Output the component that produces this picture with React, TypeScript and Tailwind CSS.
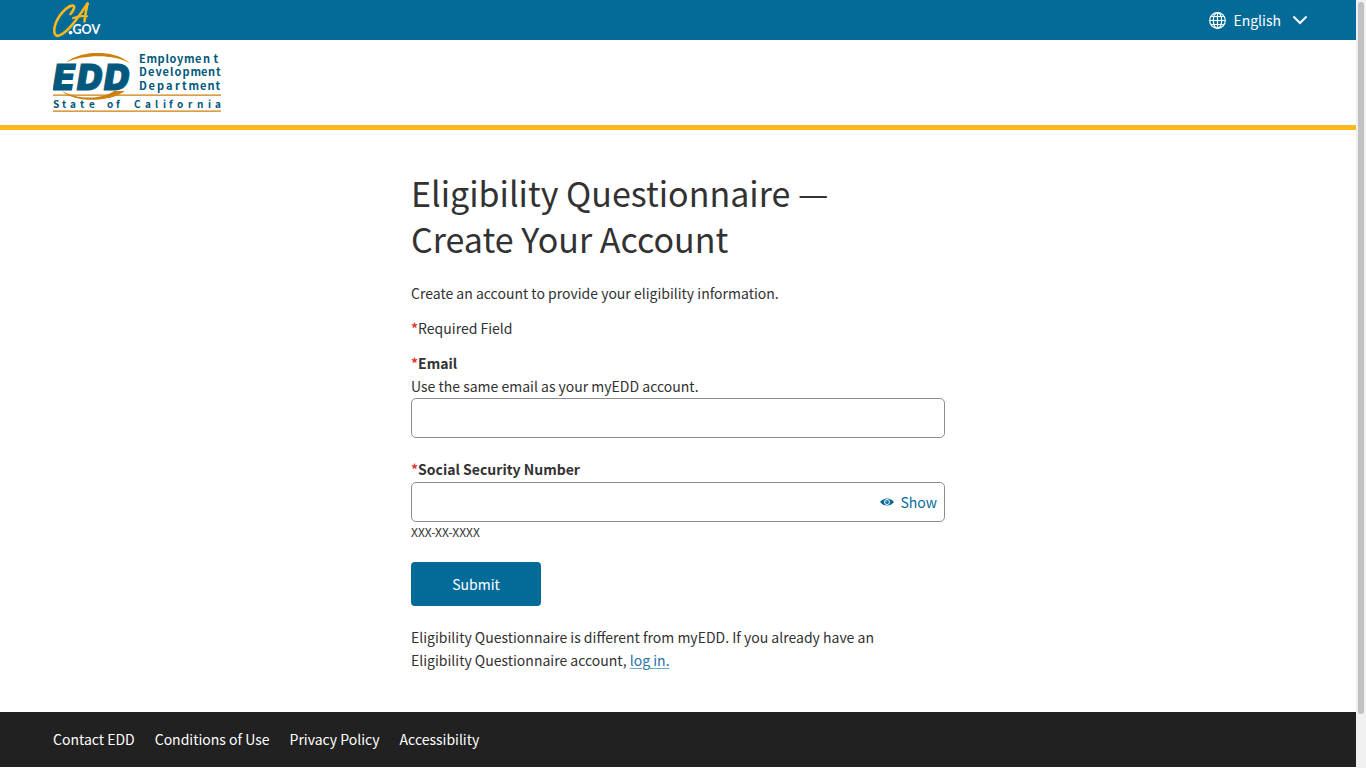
import { useState } from "react";

function CaGovLogo() {
  return (
    <svg width="48" height="36" viewBox="0 0 48 36" role="img" aria-label="CA.gov">
      <g fill="none" stroke="#fdb81e" strokeLinecap="round" strokeLinejoin="round">
        <path strokeWidth="2.6" d="M17.500 12C21 8 22.600 3.600 19.400 3.600C14 4 4.500 14 1.900 24C0 31.500 2.500 35 6.500 33.400C17 29 27 12 34.600 1.600" />
        <path strokeWidth="2.5" d="M34.600 1.600C33.300 7.500 32 13.500 31.500 19.500" />
        <path strokeWidth="2" d="M20 16.200C24.500 14.200 29 13.600 34 14.200" />
      </g>
      <circle cx="17.600" cy="30.600" r="1.900" fill="#fff" />
      <text x="19.500" y="32" fill="#fff" fontFamily="Lato, sans-serif" fontWeight="700" fontSize="12.500">GOV</text>
    </svg>
  );
}

function EddLogo() {
  return (
    <svg width="169" height="59" viewBox="0 0 169 59" role="img" aria-label="Employment Development Department, State of California">
      <path fill="#cf7f0b" d="M13 9.500C28-3 62-4 77 10.500C62 1 31 1 13 9.500Z" />
      <path fill="#cf7f0b" d="M9 38C20 49.500 56 50 72 38H61C50 46 26 47.500 9 38Z" />
      <path fill="#cf7f0b" d="M0 41.500H168V42.800H0ZM0 57.500H168V58.800H0Z" />
      <text x="0 24 51" y="36.500" fill="#02587d" stroke="#02587d" strokeWidth="1" fontFamily="Inter, sans-serif" fontStyle="italic" fontWeight="900" fontSize="35">EDD</text>
      <g fill="#02587d" fontFamily="'Noto Sans CJK SC', sans-serif" fontWeight="700" fontSize="11">
        <text y="10" x="86 93.500 104.500 112.500 116.500 124 131 142 150 160.500">Employment</text>
        <text y="23" x="86 95 102.500 109.500 117 121.500 129.500 137.500 148 155 163">Development</text>
        <text y="37" x="86 95.500 104 113 122 129 135.500 147 154.500 162.500">Department</text>
        <text y="54.500" fontSize="10" x="0 9 17 27 36 45 54 63 71 81 92 102 110 116 124 135 144 155 162">State of California</text>
      </g>
    </svg>
  );
}

function GlobeIcon() {
  return (
    <svg width="17" height="17" viewBox="0 0 17 17" fill="none" stroke="currentColor" strokeWidth="1.200" aria-hidden="true">
      <circle cx="8.500" cy="8.500" r="7.800" />
      <ellipse cx="8.500" cy="8.500" rx="4.200" ry="7.800" />
      <path d="M8.500 1v15M1 8.500h15M2.200 4.500h12.600M2.200 12.500h12.600" />
    </svg>
  );
}

function EyeIcon() {
  return (
    <svg width="14" height="8" viewBox="0 0 14 8" aria-hidden="true">
      <path fill="currentColor" d="M0 4C3.500-.8 10.500-.8 14 4C10.500 8.800 3.500 8.800 0 4Z" />
      <circle cx="7" cy="4" r="2.500" fill="none" stroke="#fff" strokeWidth="1" />
      <path d="M6 4.200A1.200 1.200 0 0 1 7.200 3" fill="none" stroke="#fff" strokeWidth=".7" />
    </svg>
  );
}

function Required() {
  return <span className="font-bold text-[#d83933]">*</span>;
}

const footerLinks = ["Contact EDD", "Conditions of Use", "Privacy Policy", "Accessibility"];
const inputClass = "block h-10 w-full rounded-[5px] border border-[#8d8d8d] bg-white px-3 outline-none";

export default function App() {
  const [shown, setShown] = useState(false);
  return (
    <div className="flex min-h-screen bg-white font-['Noto_Sans_CJK_SC',sans-serif] text-[14px] leading-[23px] text-[#323232]">
      <div className="flex min-w-0 flex-1 flex-col">
        <header>
          <div className="flex h-10 items-center justify-between bg-[#046b99] pr-12 pl-[53px] text-white">
            <a href="#ca" className="block"><CaGovLogo /></a>
            <button type="button" className="flex items-center gap-[7px]">
              <GlobeIcon />
              <span>English</span>
              <svg className="ml-1" width="16" height="10" viewBox="0 0 16 10" fill="none" stroke="currentColor" strokeWidth="2" aria-hidden="true">
                <path d="M1.500 1.500L8 8L14.500 1.500" />
              </svg>
            </button>
          </div>
          <div className="border-b-[5px] border-[#fdb81e] py-[13px] pl-[53px]">
            <a href="#edd" className="block w-fit"><EddLogo /></a>
          </div>
        </header>

        <main className="mx-auto w-full max-w-[534px] flex-1 py-10">
          <h1 className="max-w-[500px] text-[34px] leading-[46px]">Eligibility Questionnaire — Create Your Account</h1>
          <p className="mt-5">Create an account to provide your eligibility information.</p>
          <p className="mt-3"><Required />Required Field</p>
          <form onSubmit={(e) => e.preventDefault()}>
            <label htmlFor="email" className="mt-3 block font-bold"><Required />Email</label>
            <p id="email-hint">Use the same email as your myEDD account.</p>
            <input id="email" type="email" aria-describedby="email-hint" className={inputClass} />
            <label htmlFor="ssn" className="mt-5 mb-px block font-bold"><Required />Social Security Number</label>
            <div className="relative">
              <input id="ssn" type={shown ? "text" : "password"} aria-describedby="ssn-hint" className={inputClass} />
              <button type="button" onClick={() => setShown(!shown)} className="absolute inset-y-0 right-2 flex items-center gap-[7px] text-[#046b99]">
                <EyeIcon />
                {shown ? "Hide" : "Show"}
              </button>
            </div>
            <p id="ssn-hint" className="text-[12px] leading-5">XXX-XX-XXXX</p>
            <button type="submit" className="mt-5 h-11 w-[130px] rounded bg-[#046b99] text-white">Submit</button>
          </form>
          <p className="mt-5 max-w-[500px]">
            Eligibility Questionnaire is different from myEDD. If you already have an Eligibility Questionnaire account,{" "}
            <a href="#login" className="text-[#2672a8] underline decoration-[#6ea9c6] decoration-1 underline-offset-2">log in.</a>
          </p>
        </main>

        <footer className="mb-px bg-[#212121] px-[53px] py-4 text-white">
          <nav className="flex gap-5">
            {footerLinks.map((t) => (
              <a key={t} href="#footer">{t}</a>
            ))}
          </nav>
        </footer>
      </div>
      <div className="flex h-screen w-[10px] flex-col bg-[#f0f0f0] px-[2px] pt-[2px]" aria-hidden="true">
        <div className="h-[93%] rounded-full bg-[#c1c1c1]" />
      </div>
    </div>
  );
}
